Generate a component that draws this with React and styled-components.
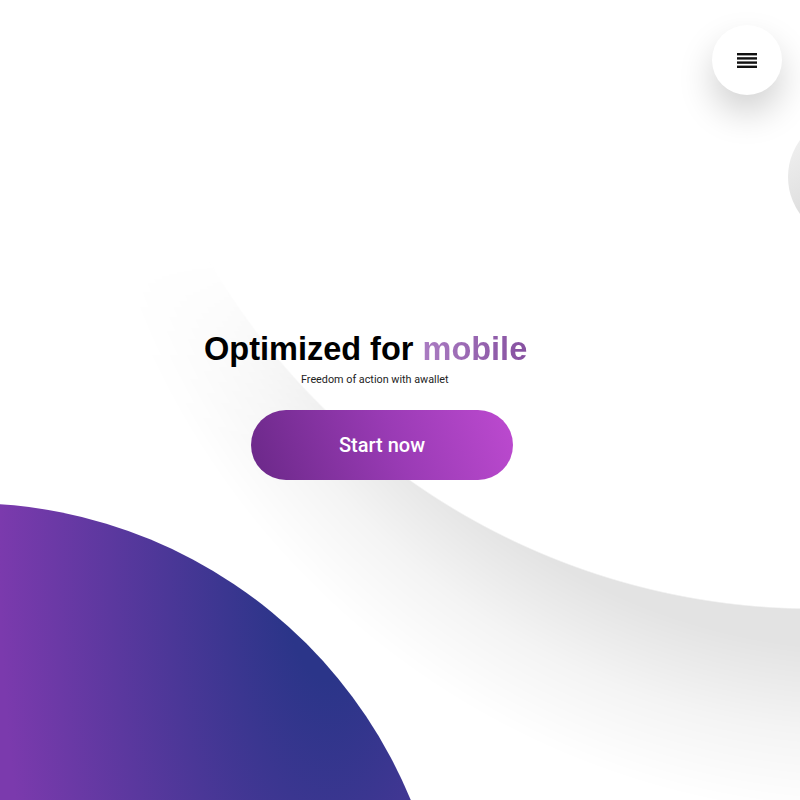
import React from "react";
import styled, { createGlobalStyle } from "styled-components";

const GlobalStyle = createGlobalStyle`
  html, body {
    margin: 0;
    padding: 0;
    background: #fff;
  }
`;

function App() {
  return (
    <Page>
      <GlobalStyle />
      {/* background art */}
      <Backdrop />
      <Orb />
      <Blob />

      <Header>
        <MenuButton aria-label="menu">
          <svg width="20" height="15" viewBox="0 0 20 15">
            <rect x="0" y="0" width="20" height="2.4" fill="#111" />
            <rect x="0" y="4.2" width="20" height="2.4" fill="#111" />
            <rect x="0" y="8.4" width="20" height="2.4" fill="#111" />
            <rect x="0" y="12.6" width="20" height="2.4" fill="#111" />
          </svg>
        </MenuButton>
      </Header>

      <Hero>
        <Title>
          Optimized for <Accent>mobile</Accent>
        </Title>
        <Tagline>Freedom of action with awallet</Tagline>
        <StartButton>Start now</StartButton>
      </Hero>
    </Page>
  );
}

const Page = styled.div`
  position: relative;
  width: 100vw;
  height: 100vh;
  overflow: hidden;
  background: #fff;
`;

// big white disc in the top right with its soft shadow, faded out towards the top
const Backdrop = styled.div`
  position: absolute;
  inset: 0;
  background:
    radial-gradient(circle at 814px -91px, #fff 699px, rgba(255, 255, 255, 0) 700.5px),
    radial-gradient(
      circle at 874px 19px,
      rgba(0, 0, 0, 0.11) 630px,
      rgba(0, 0, 0, 0.045) 715px,
      rgba(0, 0, 0, 0) 800px
    );
  -webkit-mask-image: linear-gradient(to bottom, transparent 260px, #000 450px);
  mask-image: linear-gradient(to bottom, transparent 260px, #000 450px);
`;

const Orb = styled.div`
  position: absolute;
  left: 788px;
  top: 114px;
  width: 126px;
  height: 126px;
  border-radius: 50%;
  background: linear-gradient(145deg, #f6f6f6, #c8c8c8);
`;

const Blob = styled.div`
  position: absolute;
  left: -513px;
  top: 503px;
  width: 960px;
  height: 960px;
  border-radius: 50%;
  background: radial-gradient(
    ellipse 330px 800px at 843px 57px,
    #2b3589 15%,
    #7b3aad 100%
  );
`;

const Header = styled.header`
  position: relative;
  display: flex;
  justify-content: flex-end;
  padding: 25px 18px 0;
`;

const MenuButton = styled.button`
  width: 70px;
  height: 70px;
  border: none;
  border-radius: 50%;
  background: #fff;
  box-shadow: 0 18px 35px rgba(0, 0, 0, 0.18);
  display: flex;
  align-items: center;
  justify-content: center;
  padding: 0;
  cursor: pointer;
`;

const Hero = styled.main`
  position: relative;
  display: flex;
  flex-direction: column;
  align-items: flex-start;
  padding: 236px 0 0 204px;
`;

const Title = styled.h1`
  margin: 0;
  font-family: "Liberation Sans", Arial, sans-serif;
  font-size: 32.5px;
  line-height: 37px;
  font-weight: 700;
  color: #000;
`;

const Accent = styled.span`
  background: linear-gradient(to right, #aa7cc2, #8650a0);
  -webkit-background-clip: text;
  background-clip: text;
  color: transparent;
`;

const Tagline = styled.p`
  margin: 5px 0 0 97px;
  font-family: Roboto, "Noto Sans", sans-serif;
  font-size: 10.8px;
  color: #222;
`;

const StartButton = styled.button`
  margin: 24px 0 0 47px;
  width: 262px;
  height: 70px;
  border: none;
  border-radius: 35px;
  background: linear-gradient(70deg, #6a2888 0%, #9a3bb5 55%, #bd4ad0 100%);
  color: #fff;
  font-family: Roboto, "Noto Sans", sans-serif;
  font-size: 20px;
  font-weight: 500;
  cursor: pointer;
`;

export default App;
